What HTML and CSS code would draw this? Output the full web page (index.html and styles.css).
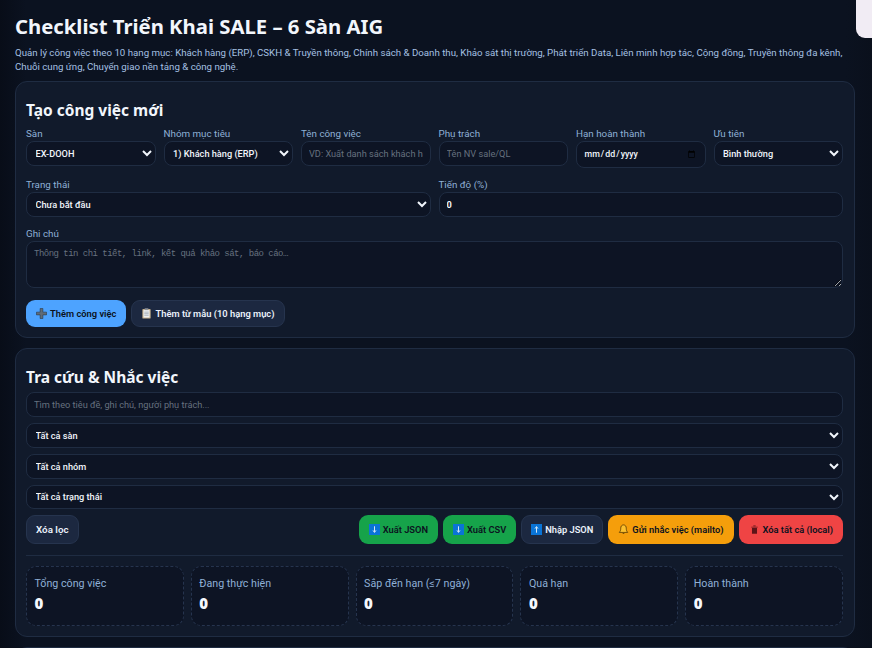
FILE: index.html
```html
<!DOCTYPE html>
<html lang="vi">
<head>
    <meta charset="UTF-8">
    <meta name="viewport" content="width=device-width, initial-scale=1.0">
    <title>Checklist Triển Khai SALE – 6 Sàn AIG</title>
    <link rel="stylesheet" href="styles.css">
</head>
<body>
    <div class="corner"></div>

    <h1 class="page-title">Checklist Triển Khai SALE – 6 Sàn AIG</h1>
    <p class="page-sub">Quản lý công việc theo 10 hạng mục: Khách hàng (ERP), CSKH &amp; Truyền thông, Chính sách &amp; Doanh thu, Khảo sát thị trường, Phát triển Data, Liên minh hợp tác, Cộng đồng, Truyền thông đa kênh, Chuỗi cung ứng, Chuyển giao nền tảng &amp; công nghệ.</p>

    <section class="card">
        <h2 class="card-title">Tạo công việc mới</h2>
        <div class="form-grid">
            <div class="field">
                <label>Sàn</label>
                <select><option>EX-DOOH</option></select>
            </div>
            <div class="field">
                <label>Nhóm mục tiêu</label>
                <select><option>1) Khách hàng (ERP)</option></select>
            </div>
            <div class="field">
                <label>Tên công việc</label>
                <input type="text" placeholder="VD: Xuất danh sách khách hàng">
            </div>
            <div class="field">
                <label>Phụ trách</label>
                <input type="text" placeholder="Tên NV sale/QL">
            </div>
            <div class="field">
                <label>Hạn hoàn thành</label>
                <input type="date" class="date">
            </div>
            <div class="field">
                <label>Ưu tiên</label>
                <select><option>Bình thường</option></select>
            </div>
            <div class="field span-3">
                <label>Trạng thái</label>
                <select><option>Chưa bắt đầu</option></select>
            </div>
            <div class="field span-3">
                <label>Tiến độ (%)</label>
                <input type="number" value="0" class="strong">
            </div>
            <div class="field span-6">
                <label>Ghi chú</label>
                <textarea placeholder="Thông tin chi tiết, link, kết quả khảo sát, báo cáo…"></textarea>
            </div>
        </div>
        <div class="actions">
            <button class="btn btn-blue">
                <svg class="ico" viewBox="0 0 12 12"><path d="M4.5 0.5h3v4h4v3h-4v4h-3v-4h-4v-3h4z" fill="#5f6b78" stroke="#27313c" stroke-width="0.6"/></svg>
                Thêm công việc
            </button>
            <button class="btn btn-dark">
                <svg class="ico" viewBox="0 0 12 12"><rect x="1.5" y="1" width="9" height="10.5" rx="1" fill="#c9b28d"/><rect x="2.7" y="2.2" width="6.6" height="8.2" fill="#eef0f2"/><rect x="4" y="0.3" width="4" height="2" fill="#8a8f96"/><path d="M3.6 4.5h4.8M3.6 6.2h4.8M3.6 7.9h4.8" stroke="#8a96a3" stroke-width="0.7"/></svg>
                Thêm từ mẫu (10 hạng mục)
            </button>
        </div>
    </section>

    <section class="card">
        <h2 class="card-title title-lg">Tra cứu &amp; Nhắc việc</h2>
        <div class="filters">
            <input type="text" placeholder="Tìm theo tiêu đề, ghi chú, người phụ trách...">
            <select><option>Tất cả sàn</option></select>
            <select><option>Tất cả nhóm</option></select>
            <select><option>Tất cả trạng thái</option></select>
        </div>
        <div class="toolbar">
            <button class="btn btn-dark btn-clear">Xóa lọc</button>
            <div class="toolbar-right">
                <button class="btn btn-green">
                    <svg class="ico" viewBox="0 0 12 12"><rect width="12" height="12" fill="#0a74d6"/><path d="M6 2.5v6M4.4 7 6 9.2 7.6 7" stroke="#e8f2fb" fill="none"/></svg>
                    Xuất JSON
                </button>
                <button class="btn btn-green">
                    <svg class="ico" viewBox="0 0 12 12"><rect width="12" height="12" fill="#0a74d6"/><path d="M6 2.5v6M4.4 7 6 9.2 7.6 7" stroke="#e8f2fb" fill="none"/></svg>
                    Xuất CSV
                </button>
                <button class="btn btn-dark">
                    <svg class="ico" viewBox="0 0 12 12"><rect width="12" height="12" fill="#0a74d6"/><path d="M6 9.5v-6M4.4 5 6 2.8 7.6 5" stroke="#e8f2fb" fill="none"/></svg>
                    Nhập JSON
                </button>
                <button class="btn btn-amber">
                    <svg class="ico" viewBox="0 0 12 12"><path d="M6 1C4 1 3 2.6 3 4.6 3 7 2.4 8 1.4 9.2h9.2C9.6 8 9 7 9 4.6 9 2.6 8 1 6 1z" fill="#fbc02d" stroke="#4a3000" stroke-width="0.8"/><path d="M4.8 10.2a1.3 1.3 0 0 0 2.4 0z" fill="#4a3000"/></svg>
                    Gửi nhắc việc (mailto)
                </button>
                <button class="btn btn-red">
                    <svg class="ico" viewBox="-2 0 14 12"><path d="M1 2.5h8v1H1zM3.5 1h3v1h-3zM1.8 4h6.4v7.5H1.8z" fill="#5d1418"/></svg>
                    Xóa tất cả (local)
                </button>
            </div>
        </div>
        <div class="stats">
            <div class="stat"><div class="stat-label">Tổng công việc</div><div class="stat-value">0</div></div>
            <div class="stat"><div class="stat-label">Đang thực hiện</div><div class="stat-value">0</div></div>
            <div class="stat"><div class="stat-label">Sắp đến hạn (≤7 ngày)</div><div class="stat-value">0</div></div>
            <div class="stat"><div class="stat-label">Quá hạn</div><div class="stat-value">0</div></div>
            <div class="stat"><div class="stat-label">Hoàn thành</div><div class="stat-value">0</div></div>
        </div>
    </section>

    <section class="card card-empty"></section>
</body>
</html>
```

FILE: styles.css
```css
html {
    overflow: hidden;
    height: 100%;
}
body {
    margin: 0;
    padding: 14px 17px 0 15px;
    height: 100%;
    box-sizing: border-box;
    overflow: hidden;
    color-scheme: dark;
    font-family: Roboto, "Noto Sans", sans-serif;
    color: #e8eef8;
    background: linear-gradient(90deg, #080d18 0%, #0b1220 3%, #0b1220 97%, #0a101c 100%);
}
.corner {
    position: absolute;
    top: 0;
    right: 0;
    width: 16px;
    height: 38px;
    background-color: #f1ecf4;
    border-bottom-left-radius: 9px;
}
.page-title {
    margin: 0;
    font-family: "Noto Sans", sans-serif;
    font-size: 20.3px;
    line-height: 24px;
    font-weight: 700;
    color: #f2f6fc;
}
.page-sub {
    margin: 8px 0 7px;
    font-size: 9.7px;
    line-height: 14px;
    color: #a5c0e2;
}
.card {
    margin-bottom: 10px;
    padding: 18px 11px 10px 10px;
    background-color: #111a2b;
    border: 1px solid #1f2c42;
    border-radius: 12px;
}
.card-empty {
    height: 60px;
}
.card-title {
    margin: 0 0 6px;
    font-family: "Noto Sans", sans-serif;
    font-size: 15.5px;
    line-height: 20px;
    font-weight: 700;
    color: #f2f6fc;
}
.title-lg {
    margin-bottom: 5px;
}
.form-grid {
    display: grid;
    grid-template-columns: repeat(6, 1fr);
    column-gap: 8px;
    row-gap: 9.3px;
    align-items: start;
}
.span-3 {
    grid-column: span 3;
}
.span-6 {
    grid-column: span 6;
}
.field label {
    display: block;
    padding-top: 1px;
    font-size: 9.8px;
    line-height: 14px;
    color: #8fb0d6;
}
input, select, textarea {
    display: block;
    width: 100%;
    box-sizing: border-box;
    height: 24.7px;
    padding: 0 7px;
    font-family: Roboto, "Noto Sans", sans-serif;
    font-size: 9.2px;
    color: #f2f6fc;
    background-color: #0d1424;
    border: 1px solid #1f2c42;
    border-radius: 8px;
    outline: none;
}
select {
    font-weight: 500;
    padding-left: 4.5px;
}
input::placeholder, textarea::placeholder {
    color: #66717f;
}
.date {
    height: 26.7px;
    padding-left: 6.5px;
    font-size: 8.8px;
    font-weight: 500;
    color-scheme: light;
    color: #f2f6fc;
}
.strong {
    font-weight: 700;
}
textarea {
    height: 47px;
    padding: 7px 7px;
    font-family: "Liberation Mono", monospace;
    font-size: 9px;
    letter-spacing: -0.52px;
    resize: vertical;
}
.actions {
    display: flex;
    gap: 5px;
    margin-top: 12.5px;
}
.btn {
    display: inline-flex;
    align-items: center;
    justify-content: center;
    gap: 3px;
    height: 27px;
    padding: 0 9px;
    font-family: Roboto, "Noto Sans", sans-serif;
    font-size: 9.35px;
    font-weight: 600;
    white-space: nowrap;
    border: 1px solid transparent;
    border-radius: 9px;
}
.ico {
    width: 11px;
    height: 11px;
    flex: none;
}
.btn-blue {
    background-color: #4da3ff;
    color: #0b1220;
}
.btn-dark {
    background-color: #1c2840;
    border-color: #26344e;
    color: #eaf1fb;
}
.btn-green {
    background-color: #16a34a;
    color: #0b1220;
}
.btn-amber {
    background-color: #f59e0b;
    color: #0b1220;
}
.btn-red {
    background-color: #ef4444;
    color: #0b1220;
}
.filters {
    display: flex;
    flex-direction: column;
    gap: 6px;
}
.toolbar {
    display: flex;
    justify-content: space-between;
    margin-top: 6px;
    padding-bottom: 11px;
    border-bottom: 1px solid #1f2c42;
}
.toolbar .btn {
    height: 29px;
    font-size: 9.3px;
}
.toolbar .btn-clear {
    font-size: 9.8px;
}
.toolbar-right {
    display: flex;
    gap: 5px;
}
.stats {
    display: grid;
    grid-template-columns: repeat(5, 1fr);
    gap: 7px;
    margin-top: 10px;
}
.stat {
    height: 60px;
    box-sizing: border-box;
    padding: 9px 7.5px;
    background-color: #0d1424;
    border: 1px dashed #26344e;
    border-radius: 10px;
}
.stat-label {
    font-size: 10.7px;
    line-height: 15px;
    color: #8fb0d6;
}
.stat-value {
    margin-top: 4px;
    font-family: "Noto Sans", sans-serif;
    font-size: 15px;
    line-height: 17px;
    font-weight: 900;
    color: #f5f8fd;
}
```
